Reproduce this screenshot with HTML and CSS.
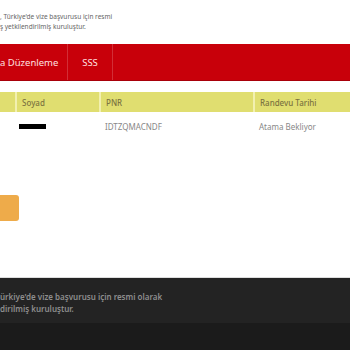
FILE: index.html
```html
<!DOCTYPE html>
<html lang="tr">
<head>
    <meta charset="UTF-8">
    <meta name="viewport" content="width=device-width, initial-scale=1.0">
    <title>Randevu Sorgulama</title>
    <link rel="stylesheet" href="styles.css">
</head>
<body>
    <div class="intro">
        <p>, Türkiye'de vize başvurusu için resmi</p>
        <p>ş yetkilendirilmiş kuruluştur.</p>
    </div>

    <nav class="nav">
        <a class="nav-item nav-first" href="#">a Düzenleme</a>
        <a class="nav-item nav-faq" href="#">SSS</a>
    </nav>

    <div class="content">
        <table class="result-table">
            <thead>
                <tr>
                    <th class="col-edge"></th>
                    <th class="col-surname">Soyad</th>
                    <th class="col-pnr">PNR</th>
                    <th>Randevu Tarihi</th>
                </tr>
            </thead>
            <tbody>
                <tr>
                    <td class="col-edge"></td>
                    <td class="col-surname"><span class="redacted"></span></td>
                    <td class="col-pnr">IDTZQMACNDF</td>
                    <td>Atama Bekliyor</td>
                </tr>
            </tbody>
        </table>

        <button class="btn" type="button"></button>
    </div>

    <footer class="footer">
        <div class="footer-top">
            <p>ürkiye'de vize başvurusu için resmi olarak</p>
            <p>dirilmiş kuruluştur.</p>
        </div>
        <div class="footer-bottom"></div>
    </footer>
</body>
</html>
```

FILE: styles.css
```css
* {
    margin: 0;
    padding: 0;
    box-sizing: border-box;
}

body {
    font-family: "Noto Sans", "Open Sans", sans-serif;
    background: #fff;
    color: #555;
    width: 350px;
    overflow: hidden;
}

.intro {
    padding-top: 12px;
    height: 44px;
    font-size: 6.5px;
    line-height: 10px;
    color: #666;
}

.nav {
    display: flex;
    height: 37px;
    background: #c8000a;
    border-bottom: 1px solid #a8000a;
}

.nav-item {
    display: flex;
    align-items: center;
    justify-content: center;
    white-space: nowrap;
    font-size: 9.5px;
    color: #ffe0e0;
    text-decoration: none;
    border-right: 1px solid rgba(255, 255, 255, 0.18);
}

.nav-first {
    justify-content: flex-start;
    width: 68px;
}

.nav-faq {
    width: 45px;
}

.content {
    padding-top: 11px;
    height: 196px;
}

.result-table {
    width: 100%;
    border-collapse: collapse;
}

.result-table th {
    height: 20px;
    background: #e0de70;
    color: #7c7440;
    font-size: 8px;
    font-weight: 500;
    text-align: left;
    padding: 0 5px;
    border-right: 2px solid #f2f0b0;
}

.result-table th:last-child {
    border-right: none;
}

.result-table td {
    height: 28px;
    padding: 0 5px;
    font-size: 8px;
    color: #888;
}

.col-edge {
    width: 16px;
}

.col-surname {
    width: 84px;
}

.col-pnr {
    width: 154px;
}

.redacted {
    display: block;
    width: 27px;
    height: 5px;
    background: #000;
    margin-left: -2px;
}

.btn {
    display: block;
    margin-top: 55px;
    width: 19px;
    height: 26px;
    background: #eeab4a;
    border: none;
    border-radius: 0 3px 3px 0;
}

.footer {
    border-top: 1px solid #ddd;
}

.footer-top {
    height: 45px;
    background: #232323;
    padding-top: 13px;
    font-size: 8px;
    line-height: 12px;
    font-weight: 600;
    color: #8e8e8e;
}

.footer-bottom {
    height: 30px;
    background: #1b1b1b;
}
```
